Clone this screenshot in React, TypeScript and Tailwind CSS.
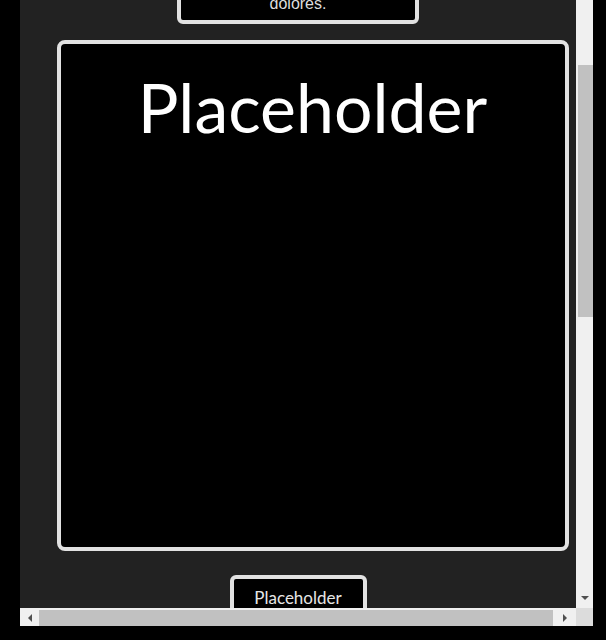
import { ReactNode } from 'react';

function Arrow({ dir }: { dir: 'left' | 'right' | 'down' }) {
    const pts = {
        left: '6,0 6,8 2,4',
        right: '2,0 2,8 6,4',
        down: '0,2 8,2 4,6',
    }[dir];
    return (
        <svg width="8" height="8" viewBox="0 0 8 8" className="block">
            <polygon points={pts} fill="#505050" />
        </svg>
    );
}

function Frame({ children }: { children: ReactNode }) {
    return (
        <div className="w-[606px] h-[640px] bg-black overflow-hidden">
            <div className="ml-[20px] w-[573px] h-[626px] flex flex-col">
                <div className="flex flex-1 min-h-0">
                    <div className="flex-1 bg-[#222222] overflow-hidden">{children}</div>
                    {/* vertical scrollbar */}
                    <div className="w-[17px] bg-[#f0f0f0] flex flex-col items-center">
                        <div className="mt-[65px] ml-[2px] w-[15px] h-[252px] bg-[#c1c1c1]" />
                        <div className="flex-1" />
                        <div className="mb-[6px]">
                            <Arrow dir="down" />
                        </div>
                    </div>
                </div>
                {/* horizontal scrollbar */}
                <div className="h-[18px] flex">
                    <div className="flex-1 bg-[#f0f0f0] flex items-end">
                        <div className="w-[19px] h-[16px] flex items-center justify-center">
                            <Arrow dir="left" />
                        </div>
                        <div className="w-[514px] h-[16px] bg-[#c1c1c1]" />
                        <div className="flex-1 h-[16px] flex items-center justify-center">
                            <Arrow dir="right" />
                        </div>
                    </div>
                    <div className="w-[17px] bg-[#dcdcdc]" />
                </div>
            </div>
        </div>
    );
}

export default function App() {
    return (
        <Frame>
            <div className="flex flex-col items-center">
                <div className="-mt-[89px] w-[242px] border-4 border-[#e2e2e2] rounded-md bg-black px-3 pt-2 pb-[7px] text-center text-[16px] leading-[18px] text-[#dddddd] font-['Liberation_Sans',Arial,sans-serif]">
                    Lorem ipsum dolor sit amet, consetetur sadipscing elitr, sed diam nonumy eirmod tempor invidunt ut labore et
                    <br />
                    dolores.
                </div>

                <div className="mt-[16px] ml-[29px] w-[512px] h-[511px] border-4 border-[#e2e2e2] rounded-lg bg-black flex flex-col items-center">
                    <span className="mt-[23px] text-[68px] leading-[80px] text-white font-['Lato','Open_Sans',sans-serif]">
                        Placeholder
                    </span>
                </div>

                <div className="mt-[24px] w-[137px] h-[44px] border-4 border-[#e2e2e2] rounded-md bg-black flex justify-center">
                    <span className="mt-[8px] text-[17px] leading-[22px] text-[#e6e6e6] font-['Lato','Open_Sans',sans-serif]">
                        Placeholder
                    </span>
                </div>
            </div>
        </Frame>
    );
}
